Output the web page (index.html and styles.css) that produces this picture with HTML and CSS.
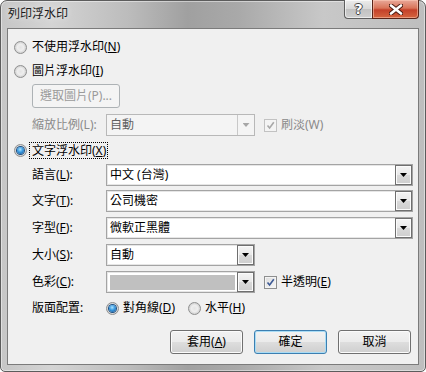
FILE: index.html
```html
<!DOCTYPE html>
<html lang="zh-Hant">
<head>
  <meta charset="UTF-8" />
  <title>列印浮水印</title>
  <link rel="stylesheet" href="styles.css">
</head>
<body>
  <div class="window">
    <div class="titlebar">
      <span class="title">列印浮水印</span>
      <div class="caption">
        <span class="cap help">?</span>
        <span class="cap close">
          <svg width="14" height="11" viewBox="0 0 14 11"><path d="M2 1.5 L12 9.5 M12 1.5 L2 9.5" stroke="#4a1a10" stroke-width="4.5" stroke-linecap="round"/><path d="M2 1.5 L12 9.5 M12 1.5 L2 9.5" stroke="#fff" stroke-width="2.6" stroke-linecap="round"/></svg>
        </span>
      </div>
    </div>

    <div class="client">
      <div class="row opt r1"><span class="radio"></span>不使用浮水印(<u>N</u>)</div>
      <div class="row opt r2"><span class="radio"></span>圖片浮水印(<u>I</u>)</div>
      <div class="row sub r3"><span class="btn disabled pick">選取圖片(P)...</span></div>
      <div class="row sub r4">
        <span class="lbl dim">縮放比例(L):</span>
        <span class="combo narrow off"><span class="val">自動</span><span class="drop"><i class="tri"></i></span></span>
        <span class="check off"><span class="box"><svg width="9" height="9" viewBox="0 0 9 9"><path d="M1.5 4.5 L3.6 7 L7.8 1.2" stroke="#a8a8a8" stroke-width="1.6" fill="none"/></svg></span>刷淡(W)</span>
      </div>
      <div class="row opt r5"><span class="radio on"></span><span class="focus">文字浮水印(<u>X</u>)</span></div>
      <div class="row sub r6">
        <span class="lbl">語言(<u>L</u>):</span>
        <span class="combo wide"><span class="val">中文 (台灣)</span><span class="drop"><i class="tri"></i></span></span>
      </div>
      <div class="row sub r7">
        <span class="lbl">文字(<u>T</u>):</span>
        <span class="combo wide"><span class="val">公司機密</span><span class="drop"><i class="tri"></i></span></span>
      </div>
      <div class="row sub r8">
        <span class="lbl">字型(<u>F</u>):</span>
        <span class="combo wide"><span class="val">微軟正黑體</span><span class="drop"><i class="tri"></i></span></span>
      </div>
      <div class="row sub r9">
        <span class="lbl">大小(<u>S</u>):</span>
        <span class="combo narrow"><span class="val">自動</span><span class="drop"><i class="tri"></i></span></span>
      </div>
      <div class="row sub r10">
        <span class="lbl">色彩(<u>C</u>):</span>
        <span class="combo narrow"><span class="swatch"></span><span class="drop"><i class="tri"></i></span></span>
        <span class="check"><span class="box"><svg width="9" height="9" viewBox="0 0 9 9"><path d="M1.5 4.5 L3.6 7 L7.8 1.2" stroke="#3d5a95" stroke-width="1.6" fill="none"/></svg></span>半透明(<u>E</u>)</span>
      </div>
      <div class="row sub r11">
        <span class="lbl">版面配置:</span>
        <span class="pick-opt"><span class="radio on"></span>對角線(<u>D</u>)</span>
        <span class="pick-opt second"><span class="radio"></span>水平(<u>H</u>)</span>
      </div>
      <div class="row buttons">
        <span class="btn">套用(<u>A</u>)</span>
        <span class="btn default">確定</span>
        <span class="btn">取消</span>
      </div>
    </div>
  </div>
</body>
</html>
```

FILE: styles.css
```css
html, body {
  margin: 0;
  padding: 0;
  background: #fff;
}

body {
  font-family: "Noto Sans", "Noto Sans CJK TC", sans-serif;
  font-size: 12px;
  color: #000;
}

.window {
  box-sizing: border-box;
  width: 426px;
  height: 372px;
  border: 1px solid #5c5c5c;
  border-radius: 7px 7px 5px 5px;
  background: linear-gradient(90deg, #c6c6c6 0%, #d4d4d4 12%, #bcbcbc 30%, #a0a0a0 44%, #a9a9a9 56%, #c8c8c8 76%, #bebebe 100%);
  box-shadow: inset 0 0 0 1px rgba(255, 255, 255, 0.45);
  padding: 0 6px 6px 6px;
  display: flex;
  flex-direction: column;
}

.titlebar {
  height: 27px;
  display: flex;
  justify-content: space-between;
  align-items: flex-start;
}

.title {
  margin-top: 5px;
  padding-left: 1px;
  line-height: 16px;
  font-size: 12px;
  color: #1a1a1a;
  text-shadow: 0 0 6px rgba(255, 255, 255, 0.8);
}

.caption {
  display: flex;
  margin-top: -1px;
}

.cap {
  box-sizing: border-box;
  height: 19px;
  display: flex;
  align-items: center;
  justify-content: center;
  border: 1px solid #5e5e5e;
  border-top: none;
}

.help {
  width: 28px;
  border-right: none;
  border-radius: 0 0 0 4px;
  background: linear-gradient(#ececec 0%, #d8d8d8 48%, #c2c2c2 52%, #cfcfcf 100%);
  box-shadow: inset 0 0 0 1px rgba(255, 255, 255, 0.6);
  font-family: "DejaVu Sans", sans-serif;
  font-weight: bold;
  font-size: 14px;
  color: #fff;
  text-shadow: 1px 0 #444, -1px 0 #444, 0 1px #444, 0 -1px #444;
}

.close {
  width: 47px;
  border-color: #5a2418;
  border-radius: 0 0 4px 0;
  background: linear-gradient(#e9a99a 0%, #d97459 45%, #c4412a 55%, #d5653f 100%);
  box-shadow: inset 0 0 0 1px rgba(255, 210, 190, 0.5);
}

.client {
  flex: 1;
  background: #f0f0f0;
  border: 1px solid #7b7b7b;
  padding: 0 6px 0 6px;
  display: flex;
  flex-direction: column;
}

.row {
  display: flex;
  align-items: center;
  line-height: 16px;
  white-space: nowrap;
}

.opt { height: 16px; }
.sub { padding-left: 18px; }

.r1 { margin-top: 10px; }
.r2 { margin-top: 8px; }
.r3 { margin-top: 5px; height: 24px; }
.r4 { margin-top: 6px; height: 22px; }
.r5 { margin-top: 6px; height: 17px; }
.r6 { margin-top: 5px; height: 22px; }
.r7 { margin-top: 4px; height: 22px; }
.r8 { margin-top: 5px; height: 22px; }
.r9 { margin-top: 5px; height: 22px; }
.r10 { margin-top: 5px; height: 22px; }
.r11 { margin-top: 7px; height: 16px; }
.buttons { margin-top: 14px; justify-content: flex-end; gap: 11px; padding-right: 1px; }

u { text-decoration: underline; text-underline-offset: 1px; }

.radio {
  box-sizing: border-box;
  width: 13px;
  height: 13px;
  border-radius: 50%;
  border: 1px solid #8e8f8f;
  background: radial-gradient(circle, #e4e4e4 0%, #eeeeee 40%, #d4d4d4 70%, #f6f6f6 100%);
  margin-right: 5px;
  flex: none;
  display: flex;
  align-items: center;
  justify-content: center;
}

.radio.on::after {
  content: "";
  width: 7px;
  height: 7px;
  border-radius: 50%;
  background: radial-gradient(circle at 45% 35%, #aee4ff 0%, #3a9ae0 45%, #0d4b8c 100%);
  box-shadow: 0 0 0 1px #1c4f83;
}

.focus {
  margin-left: -3px;
  padding: 0 1px 0 2px;
  border: 1px dotted #000;
  line-height: 15px;
}

.lbl {
  width: 74px;
  flex: none;
}

.dim { color: #8a8a8a; }

.combo {
  box-sizing: border-box;
  height: 22px;
  border: 1px solid #a4a4a4;
  box-shadow: inset 0 0 0 1px #e6e6e6;
  background: #fff;
  display: flex;
  align-items: center;
  flex: none;
}

.wide { width: 307px; }
.narrow { width: 149px; }

.val { padding-left: 3px; }

.drop {
  box-sizing: border-box;
  margin-left: auto;
  width: 17px;
  height: 20px;
  border: 1px solid #6f6f6f;
  background: linear-gradient(#f4f4f4 0%, #e8e8e8 50%, #d9d9d9 51%, #cecece 100%);
  box-shadow: inset 0 0 0 1px #fbfbfb;
  display: flex;
  align-items: center;
  justify-content: center;
}

.tri {
  width: 7px;
  height: 4px;
  background: #000;
  clip-path: polygon(0 0, 100% 0, 50% 100%);
}

.combo.off {
  background: #f4f4f4;
  border-color: #b8b8b8;
  box-shadow: none;
}

.combo.off .val { color: #5f5f5f; }

.combo.off .drop {
  border: none;
  border-left: 1px solid #c8c8c8;
  background: transparent;
  box-shadow: none;
  height: 20px;
}

.combo.off .tri { background: #a6a6a6; }

.swatch {
  margin-left: 3px;
  width: 125px;
  height: 15px;
  background: #c0c0c0;
}

.check {
  display: flex;
  align-items: center;
  margin-left: 9px;
}

.box {
  box-sizing: border-box;
  width: 13px;
  height: 13px;
  border: 1px solid #8e8f8f;
  background: linear-gradient(135deg, #dcdcdc 0%, #f8f8f8 100%);
  box-shadow: inset 0 0 0 1px #f4f4f4;
  margin-right: 4px;
  display: flex;
  align-items: center;
  justify-content: center;
}

.check.off { color: #8a8a8a; }
.check.off .box { border-color: #c2c2c2; background: #f4f4f4; }

.pick-opt {
  display: flex;
  align-items: center;
}

.pick-opt .radio { margin-right: 4px; }
.pick-opt.second { margin-left: 13px; }

.btn {
  box-sizing: border-box;
  width: 73px;
  height: 24px;
  border: 1px solid #707070;
  border-radius: 3px;
  background: linear-gradient(#f2f2f2 0%, #ebebeb 48%, #dddddd 52%, #cfcfcf 100%);
  box-shadow: inset 0 0 0 1px #fbfbfb;
  display: flex;
  align-items: center;
  justify-content: center;
}

.btn.default {
  border-color: #3c7fb1;
  box-shadow: inset 0 0 0 1px #a9dcf5;
}

.btn.disabled {
  width: 88px;
  border-color: #adb2b5;
  background: #f4f4f4;
  box-shadow: none;
  color: #9a9a9a;
}
```
